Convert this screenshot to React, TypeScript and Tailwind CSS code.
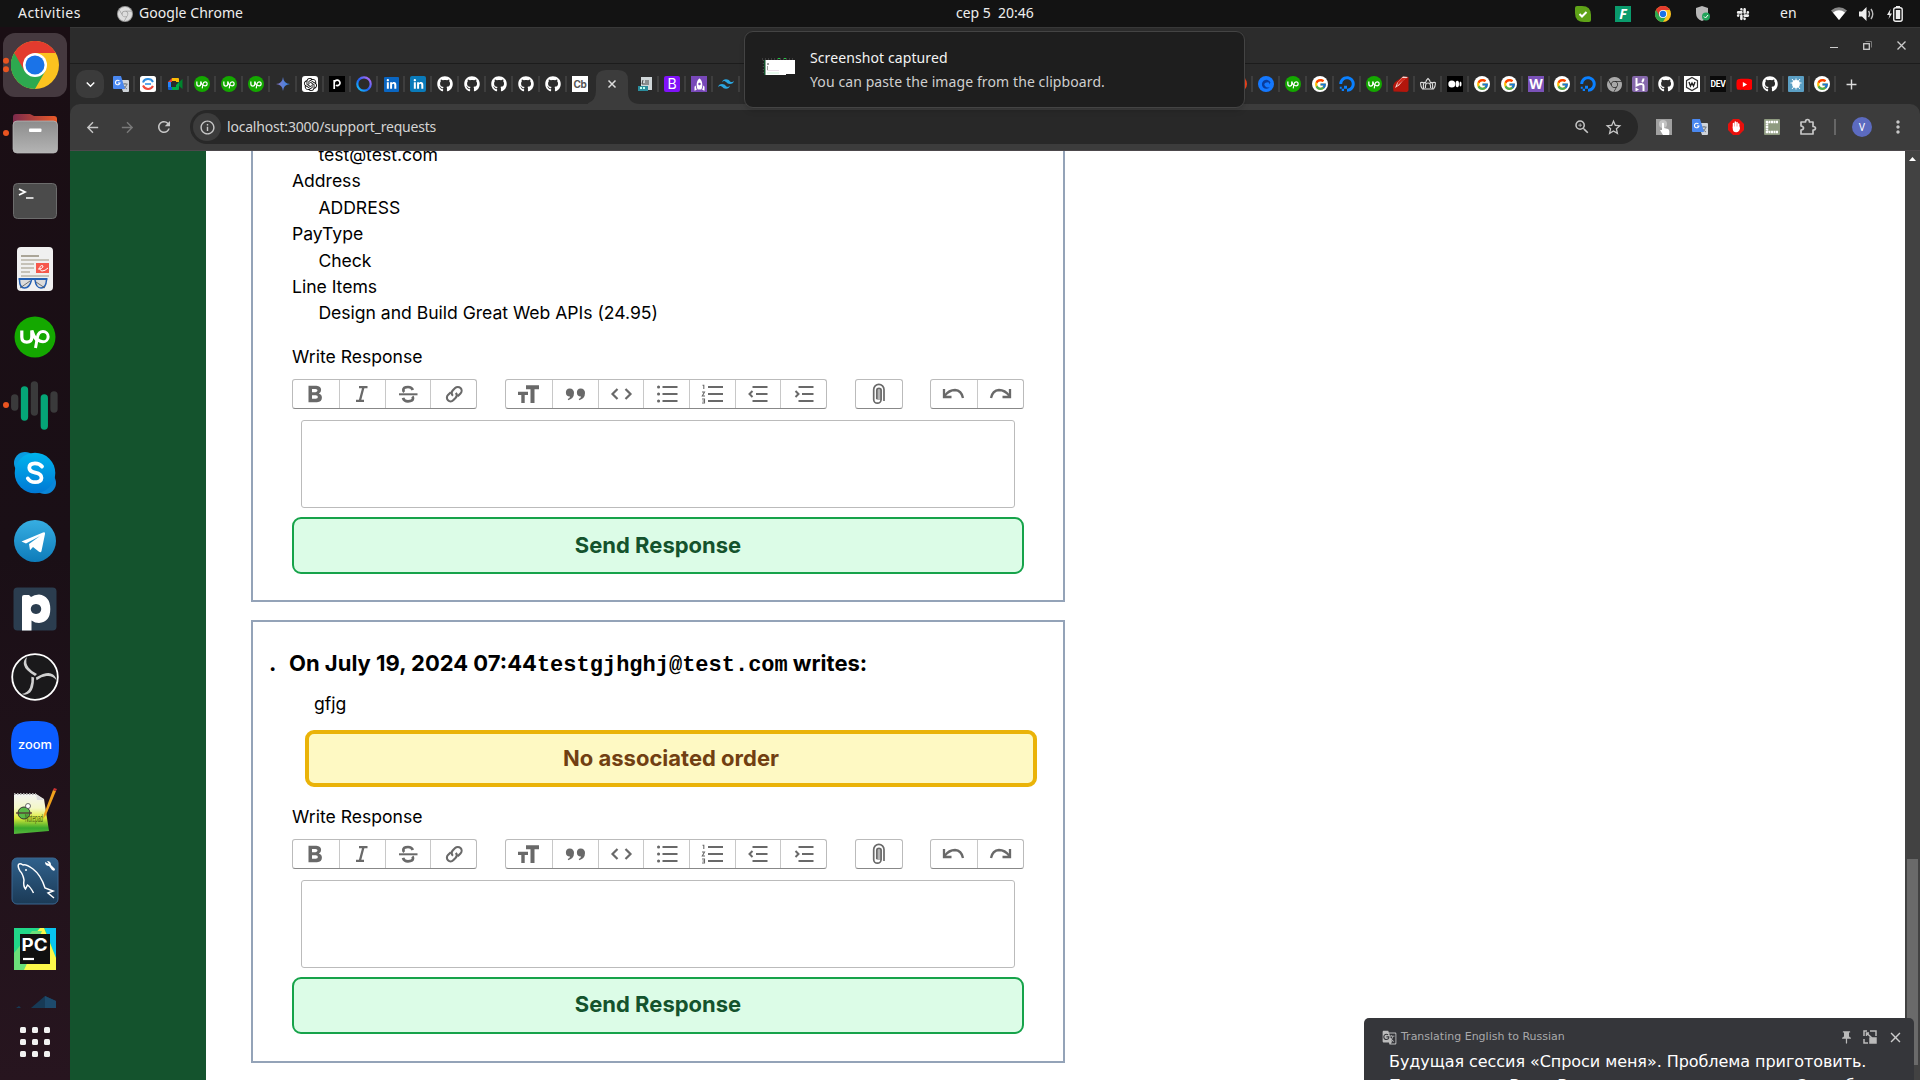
import React from "react";
import { FaDigitalOcean, FaGithub, FaLinkedinIn, FaSlack, FaYoutube } from "react-icons/fa";
import { FcGoogle } from "react-icons/fc";
import { SiHeroku, SiOpenai, SiTailwindcss, SiGooglechrome } from "react-icons/si";
import {
  MdAdd, MdArrowBack, MdArrowForward, MdClose, MdGTranslate, MdInfoOutline, MdKeyboardArrowDown,
  MdMoreVert, MdOutlineExtension, MdPushPin, MdRefresh, MdRocket, MdStarBorder, MdZoomIn,
} from "react-icons/md";

function ChromeLogo({ size }: { size: number }) {
  return (
    <svg width={size} height={size} viewBox="0 0 48 48" className="shrink-0">
      <circle cx="24" cy="24" r="24" fill="#fcc31f" />
      <path d="M3.2 12 A24 24 0 0 0 24 48 L34.4 30 L24 24 Z" fill="#2da94f" />
      <path d="M3.2 12 A24 24 0 0 1 44.8 12 H24 L13.6 30 Z" fill="#e33b2e" />
      <circle cx="24" cy="24" r="12" fill="#fff" />
      <circle cx="24" cy="24" r="9.5" fill="#1a73e8" />
    </svg>
  );
}

function UpMark() {
  return (
    <>
      <circle cx="20.500" cy="20.500" r="20.500" fill="#14a800" />
      <path d="M7.300 14v6.500q0 5.200 5 5.200t5-5.200V14q1.500 6 5.500 10" stroke="#fff" strokeWidth="3.200" fill="none" />
      <path d="M21 31.500l2-11q1-5.500 5.500-5.500a5 5 0 0 1 0 10.300q-3.500 0-6-3" stroke="#fff" strokeWidth="3" fill="none" />
    </>
  );
}
function Up() {
  return (
    <svg width="16" height="16" viewBox="0 0 41 41">
      <UpMark />
    </svg>
  );
}
function G() {
  return (
    <span className="flex h-4 w-4 items-center justify-center rounded-full bg-white">
      <FcGoogle size={13} />
    </span>
  );
}
function Gh() {
  return <FaGithub size={16} className="text-white" />;
}
function Ocean() {
  return <FaDigitalOcean size={16} className="text-[#0a80ff]" />;
}
function Li({ light = false }: { light?: boolean }) {
  return (
    <span className={light ? "flex h-4 w-4 items-center justify-center rounded-[2px] bg-[#0a7bba] text-white" : "flex h-[15px] w-[15px] items-center justify-center rounded-[1px] bg-[#0a66c2] text-white"}>
      <FaLinkedinIn size={11} />
    </span>
  );
}
function Translate() {
  return (
    <svg width="16" height="16" viewBox="0 0 16 16">
      <path d="M6 4h9q1 0 1 1v10q0 1-1 1h-5z" fill="#cfd4da" />
      <path d="M9.5 8h5M12 7v1M14 8q-1 3.500-4 5M10.500 9.500q1.500 2.500 3.500 3.500" stroke="#6b747c" fill="none" strokeWidth="0.900" />
      <path d="M1 0h7l4 13H1q-1 0-1-1V1q0-1 1-1z" fill="#4a88f0" />
      <path d="M6.500 5A2.300 2.300 0 1 0 7 7H5" stroke="#fff" fill="none" strokeWidth="1.100" />
    </svg>
  );
}
function Ring() {
  return (
    <svg width="16" height="16" viewBox="0 0 16 16">
      <defs>
        <linearGradient id="ring" x1="0" x2="1" y1="1" y2="0">
          <stop offset="0" stopColor="#14d0ff" /><stop offset=".45" stopColor="#1c62f4" /><stop offset="1" stopColor="#c86cf5" />
        </linearGradient>
      </defs>
      <circle cx="8" cy="8" r="6.700" fill="none" stroke="url(#ring)" strokeWidth="2.200" />
    </svg>
  );
}

const leftTabs: React.ReactNode[] = [
  <Translate />,
  <svg width="16" height="16" viewBox="0 0 16 16"><rect width="16" height="16" rx="2.500" fill="#fff" /><path d="M3 6.500C4.500 2 11 2 13 6" fill="none" stroke="#2f8de0" strokeWidth="2" /><path d="M3 9.500C5 14 11 14 13 10" fill="none" stroke="#f04a3c" strokeWidth="2" /><path d="M5 8h6" stroke="#4aa0e8" strokeWidth="1.800" /></svg>,
  <svg width="16" height="16" viewBox="0 0 16 16"><path d="M1 6l4-4v4z" fill="#ea4335" /><path d="M5 2h6q1 0 1 1v3H9V5H5z" fill="#fbbc04" /><path d="M1 6h3v5H1z" fill="#2684fc" /><path d="M1 11h4v3H2q-1 0-1-1z" fill="#1260d0" /><path d="M5 11h4V9l3-3v7q0 1-1 1H5z" fill="#00ac47" /><path d="M12 6l3.500-3v10L12 10z" fill="#00832d" /></svg>,
  <Up />, <Up />, <Up />,
  <svg width="14" height="14" viewBox="0 0 14 14"><defs><linearGradient id="gem" x1="0" x2="1"><stop offset="0" stopColor="#8a78c8" /><stop offset="1" stopColor="#2f86e8" /></linearGradient></defs><path d="M7 0Q7.500 6.500 14 7Q7.500 7.500 7 14Q6.500 7.500 0 7Q6.500 6.500 7 0z" fill="url(#gem)" /></svg>,
  <span className="flex h-4 w-4 items-center justify-center rounded-[3px] bg-white text-black"><SiOpenai size={13} /></span>,
  <svg width="16" height="16" viewBox="0 0 16 16"><rect width="16" height="16" fill="#000" /><path d="M5.200 4v9M5.200 7a2.900 2.700 0 1 1 1.600 2.300" fill="none" stroke="#fff" strokeWidth="1.700" /></svg>,
  <Ring />, <Li />, <Li light />, <Gh />, <Gh />, <Gh />, <Gh />, <Gh />,
];

const rightTabs: React.ReactNode[] = [
  <svg width="16" height="16" viewBox="0 0 16 16"><circle cx="8" cy="8" r="8" fill="#1478ff" /><path d="M12.500 6.500A4.500 4.500 0 1 0 12 11Q9 12.500 7 10T8.500 6.500 11 8.500z" fill="#0a3c9c" /></svg>,
  <Up />, <G />, <Ocean />, <Up />,
  <svg width="16" height="16" viewBox="0 0 16 16"><path d="M10 .500L15.500 1 15.500 14.500 14 16 .500 15.500 0 10q1-4 5-6z" fill="#b3160c" /><path d="M10 .500l5 .5-5 3.500-4 5-4 2.500 2-5z" fill="#f2d8d4" /><path d="M9 2l5 0-5 3.500-5 4.500 1-4z" fill="#d52a1c" /></svg>,
  <svg width="16" height="16" viewBox="0 0 16 16" fill="none" stroke="#ddd" strokeWidth="1.100"><path d="M4 13H2.500Q0 9.500.8 6.500q2-.5 3.500 1M12 13h1.500q2.500-3.500 1.700-6.500-2-.5-3.500 1M4 13q-1.500-4 .3-6.500L5.500 7Q6 4 8 2.500 10 4 10.500 7l1.200-.5Q13.500 9 12 13zM5.500 12q-.5-5 2.500-5t2.500 5" /></svg>,
  <span className="flex h-4 w-4 items-center justify-center bg-black text-white"><svg width="14" height="8" viewBox="0 0 14 8" fill="#fff"><circle cx="3.800" cy="4" r="3.500" /><ellipse cx="9.300" cy="4" rx="1.700" ry="3.200" /><ellipse cx="12.500" cy="4" rx="1" ry="2.600" /></svg></span>,
  <G />, <G />,
  <span className="flex h-4 w-4 items-center justify-center bg-[#7b52b8] text-[14px] leading-none font-bold text-white">W</span>,
];
const farTabs: React.ReactNode[] = [
  <G />, <Ocean />,
  <SiGooglechrome size={15} className="text-[#a8a8a8]" />,
  <span className="flex h-4 w-4 items-center justify-center rounded-[2px] bg-[#8668ac] text-white"><svg width="11" height="13" viewBox="0 0 11 13" fill="none" stroke="#fff" strokeWidth="2"><path d="M1.500 0v7.500Q8.500 4.500 8.500 8v5M8.500.500Q8.500 2.500 7 4" /><path d="M.500 9.500L4 11.500.500 13.500z" fill="#fff" stroke="none" /></svg></span>,
  <Gh />,
  <svg width="16" height="16" viewBox="0 0 16 16"><rect width="16" height="16" fill="#fff" /><path d="M8 1.500l5.500 3.200v6.600L8 14.500l-5.500-3.200V4.700z" fill="none" stroke="#333" strokeWidth="1.200" /><path d="M5 6l1.500 4L8 7l1.500 3L11 6" fill="none" stroke="#222" strokeWidth="1.400" /></svg>,
  <span className="flex h-4 w-4 items-center justify-center bg-[#0a0a0a]"><span className="font-['Roboto'] text-[8.5px] leading-none font-bold tracking-[-0.3px] text-white">DEV</span></span>,
  <span className="flex h-4 w-4 items-center justify-center bg-[linear-gradient(#fff,#fff)] bg-[size:6px_6px] bg-center bg-no-repeat text-[#f00]"><FaYoutube size={17} className="shrink-0" /></span>,
  <Gh />,
  <svg width="16" height="16" viewBox="0 0 16 16"><rect width="16" height="16" rx="1" fill="#5b9fc4" /><circle cx="8" cy="8" r="3.900" fill="#fff" /><g stroke="#fff" strokeWidth="1"><path d="M8 2.500v11M2.500 7h11M4 3l8 10M12 3L4 13" /></g></svg>,
  <G />,
];

function Sep() {
  return <span className="h-4 w-[2px] shrink-0 bg-[#3e3e3e]" />;
}
function Tab({ icon, narrow }: { icon: React.ReactNode; narrow?: boolean }) {
  return (
    <div className={narrow ? "flex w-[26px] shrink-0 items-center" : "flex w-[27px] shrink-0 items-center"}>
      <span className="flex h-4 w-4 shrink-0 items-center justify-center overflow-hidden">{icon}</span>
      <span className="w-1 shrink-0" />
      <Sep />
    </div>
  );
}

/* ---------- dock ---------- */
const dockIcons: { dots: number; art: React.ReactNode }[] = [
  {
    dots: 2,
    art: (
      <>
        <rect x="3" y="2" width="64" height="64" rx="12" fill="#45393f" />
        <g transform="translate(11 10)">
          <ChromeLogo size={48} />
        </g>
      </>
    ),
  },
  {
    dots: 1,
    art: (
      <>
        <path d="M13 18q0-3 3-3h14l4 2h20q3 0 3 3v20H13z" fill="url(#folder)" />
        <rect x="13" y="22" width="44.500" height="32" rx="4" fill="url(#gray)" stroke="#bbb" strokeWidth=".7" />
        <rect x="29" y="29.500" width="12.500" height="3.500" rx="1" fill="#fff" />
      </>
    ),
  },
  {
    dots: 0,
    art: (
      <>
        <rect x="13.500" y="16.500" width="43" height="35" rx="4" fill="#4b4b4b" stroke="#6c6c6c" />
        <path d="M19 22l6 3-6 3" stroke="#fff" strokeWidth="1.800" fill="none" />
        <path d="M26 31h7.500" stroke="#fff" strokeWidth="1.500" />
      </>
    ),
  },
  {
    dots: 0,
    art: (
      <>
        <rect x="17" y="12" width="36" height="44" rx="4" fill="#f0f0f0" />
        <path d="M21 21h18" stroke="#aaa598" strokeWidth="2" />
        <path d="M21 25h28M21 29h13M21 33h13M21 37h9M21 41h28" stroke="#c6c2b8" strokeWidth="1.800" />
        <rect x="36" y="28" width="13" height="10" fill="#f6584c" />
        <path d="M38 34q5 0 5-3c-3-2-5 4-1 5q3 0 6-3" stroke="#fff" fill="none" />
        <path d="M18.500 44h29" stroke="#2460b4" strokeWidth="2" />
        <path d="M19.500 45q0 8 5 8t7-8M35 45q1 8 6 8t5.500-8" stroke="#2460b4" strokeWidth="1.500" fill="#dcdcdc" />
        <path d="M20 53l10-7M36 47l9 6" stroke="#555" strokeWidth=".8" />
      </>
    ),
  },
  {
    dots: 0,
    art: (
      <g transform="translate(14.500 13.500)">
        <UpMark />
      </g>
    ),
  },
  {
    dots: 1,
    art: (
      <g strokeWidth="7.300" strokeLinecap="round">
        <path d="M14.700 27v9M34.400 14v27M54 24v14" stroke="#3a3a3b" />
        <path d="M24.500 19v27M44.300 27v28" stroke="#05a577" />
      </g>
    ),
  },
  {
    dots: 0,
    art: (
      <>
        <circle cx="25" cy="24" r="11" fill="#0a9be0" />
        <circle cx="45" cy="44" r="11" fill="#0a86d8" />
        <circle cx="35" cy="34" r="20.300" fill="url(#sky)" />
        <path d="M42 27.500q-2.500-3.200-7-3.200-5.700 0-5.700 4.500 0 3.800 5.900 4.900 6.500 1.300 6.300 5.300-.3 4.200-6.500 4.200-5 0-7.200-3.800" stroke="#fff" strokeWidth="3.800" fill="none" strokeLinecap="round" />
      </>
    ),
  },
  {
    dots: 0,
    art: (
      <>
        <circle cx="35" cy="34" r="21" fill="url(#tele)" />
        <path d="M21.500 34.500L43 25.500q2.500-1 2 1.500L41.500 44q-.5 2-2.500.8L33 40l-3 3.300-1-6.300 11-8-14 7.500z" fill="#fff" />
      </>
    ),
  },
  {
    dots: 0,
    art: (
      <>
        <rect x="13.500" y="12.500" width="43" height="43" rx="4" fill="#2b3d4f" />
        <path fillRule="evenodd" d="M22 22q0-2 2-2h5l2 2q3-2.500 8-2.500 11.300 1.500 11.300 14.500T39 48q-4 0-7.500-2.500v10H22zM36 29c-7 0-7 10 0 10s7-10 0-10z" fill="#fff" />
      </>
    ),
  },
  {
    dots: 0,
    art: (
      <>
        <circle cx="35" cy="34" r="22.800" fill="#1a191b" stroke="#fff" strokeWidth="1.800" />
        <g fill="#d0d0d0">
          <path d="M35 33Q25 27 24 22q-1-5 3-8-2 6 1.500 10.500 3 4 8.500 6.500z" />
          <path d="M35 33Q25 27 24 22q-1-5 3-8-2 6 1.500 10.500 3 4 8.500 6.500z" transform="rotate(120 35 34)" />
          <path d="M35 33Q25 27 24 22q-1-5 3-8-2 6 1.500 10.500 3 4 8.500 6.500z" transform="rotate(240 35 34)" />
        </g>
      </>
    ),
  },
  {
    dots: 0,
    art: (
      <>
        <path d="M35 10C54 10 59 15 59 34S54 58 35 58 11 53 11 34 16 10 35 10z" fill="#0b5cff" />
        <text x="35" y="37.500" textAnchor="middle" className="font-['Inter'] text-[12px] font-medium" textLength="34" lengthAdjust="spacingAndGlyphs" fill="#fff">zoom</text>
      </>
    ),
  },
  {
    dots: 0,
    art: (
      <>
        <path d="M14 15h22l8 5 5 32-35 3z" fill="url(#note)" />
        <path d="M14 15h22" stroke="#aaa" strokeWidth="2" strokeDasharray="1.500 1.500" />
        <path d="M36 15l1 6 7 0z" fill="#ddd" />
        <path d="M56 12L46 36l-3 4 1-5L53 11z" fill="#f0a21c" />
        <path d="M56 12l1-2-3-1-1 2z" fill="#c33" />
        <ellipse cx="24" cy="34" rx="6" ry="6" fill="#5ab848" stroke="#333" />
        <circle cx="28" cy="27" r="2.500" fill="#fff" stroke="#333" strokeWidth=".7" />
        <path d="M16 34h16" stroke="#533" strokeWidth="1.300" />
        <text x="25" y="43" className="font-['Liberation_Sans'] text-[11px]" textLength="18" lengthAdjust="spacingAndGlyphs" fill="#3c5a10">Notepad</text>
      </>
    ),
  },
  {
    dots: 0,
    art: (
      <>
        <rect x="12" y="11" width="46" height="46" rx="5" fill="url(#sql)" stroke="#3a6690" />
        <path d="M54 51l-6-5 5-2-8-3Q41 28 33 22q-7-5-10-4-3-2-4.500-.5-1 2 1.500 6.500 3 3 4 9-1 6 1.500 9l2-4q3 2 6 8" stroke="#fff" strokeWidth="1.500" fill="none" />
        <circle cx="26" cy="23" r="1" fill="#fff" />
        <path d="M45 15q0 4 4 4l3 4q3 2 3-1l-4-4q0-4-4-4l2 3z" fill="#fff" />
      </>
    ),
  },
  {
    dots: 0,
    art: (
      <>
        <rect x="14" y="13" width="42" height="42" fill="#21d789" />
        <path d="M45 13h11v30z" fill="#08c5f0" />
        <path d="M14 43L40 13h4l12 30v12H24z" fill="#fcf84a" />
        <path d="M14 38l18-22h10L24 55H14z" fill="#6be07a" />
        <rect x="20" y="19" width="30" height="30" fill="#101010" />
        <text x="21.500" y="35.500" className="font-['Inter'] text-[17px] font-bold" textLength="26" lengthAdjust="spacingAndGlyphs" fill="#fff">PC</text>
        <path d="M23 44h11" stroke="#fff" strokeWidth="2.200" />
      </>
    ),
  },
];

function Dock() {
  return (
    <aside className="flex w-[70px] shrink-0 flex-col bg-linear-to-b from-[#1a0e14] via-[#1a0f16] to-[#27151f] pt-1">
      <svg width="0" height="0" className="absolute">
        <defs>
          <linearGradient id="folder"><stop offset="0" stopColor="#7c2a4c" /><stop offset="1" stopColor="#ea5a28" /></linearGradient>
          <linearGradient id="gray" x2="0" y2="1"><stop offset="0" stopColor="#8c8c8c" /><stop offset="1" stopColor="#b4b4b4" /></linearGradient>
          <linearGradient id="sky" x2="0" y2="1"><stop offset="0" stopColor="#00b4ee" /><stop offset="1" stopColor="#0078d4" /></linearGradient>
          <linearGradient id="tele" x2="0" y2="1"><stop offset="0" stopColor="#37aee2" /><stop offset="1" stopColor="#0e7cba" /></linearGradient>
          <linearGradient id="sql" x2="0" y2="1"><stop offset="0" stopColor="#30618c" /><stop offset="1" stopColor="#1b3a56" /></linearGradient>
          <linearGradient id="note" x2="0" y2="1"><stop offset="0" stopColor="#f4f4f4" /><stop offset=".35" stopColor="#f4f8c8" /><stop offset=".6" stopColor="#e0ec3a" /><stop offset=".85" stopColor="#38a82c" /><stop offset="1" stopColor="#58b83c" /></linearGradient>
        </defs>
      </svg>
      {dockIcons.map((d, i) => (
        <svg key={i} width="70" height="68" viewBox="0 0 70 68" className="shrink-0">
          {d.art}
          {d.dots === 1 && <circle cx="6" cy="34" r="3" fill="#e95420" />}
          {d.dots === 2 && <><circle cx="6" cy="29.700" r="3" fill="#e95420" /><circle cx="6" cy="38.300" r="3" fill="#e95420" /></>}
        </svg>
      ))}
      <svg width="70" height="26" viewBox="0 0 70 26" className="shrink-0">
        <path d="M31 25l14-12 11 5v7z" fill="#173a56" />
        <path d="M45 13l11 5v7H45z" fill="#1d4a6c" />
        <path d="M16 25l3-2 2 2z" fill="#173a56" />
      </svg>
      <div className="mt-[18px] ml-5 grid w-[30px] grid-cols-3 gap-x-[6px] gap-y-[6px]">
        {Array.from({ length: 9 }).map((_, i) => (
          <span key={i} className="h-[6px] w-[6px] rounded-[1.5px] bg-[#f2f2f2]" />
        ))}
      </div>
    </aside>
  );
}

/* ---------- page ---------- */
const S = "#696969";
const bars = (x: number) => <path d={`M${x} 7h15M${x} 14h15M${x} 21h15`} strokeWidth="2" />;
const textTools: React.ReactNode[] = [
  <path fillRule="evenodd" fill={S} stroke="none" d="M7.500 5.700h8q4.600.3 4.600 4.200 0 2.500-2.200 3.700 3 1 3 4.200 0 4.200-4.900 4.400H7.500zM11 9v3.200h3.500q2-.2 2-1.600t-2-1.600zM11 15.300v3.500h3.700q2.200-.2 2.200-1.800t-2.200-1.700z" />,
  <path d="M11 7.200h8.500M8 20.800h8M15.500 7l-3.700 14" strokeWidth="2.300" />,
  <><path d="M5 14.300h18.500" strokeWidth="2" /><path d="M18.800 10Q17.800 7 14 7q-4.700 0-4.700 3 0 1.200 1 2M9 17.800q1 3.500 5 3.500 5 0 5-3 0-1-.7-1.800" strokeWidth="2.700" /></>,
  <g strokeWidth="2.100" transform="translate(14 14) rotate(-45)"><path d="M-1-3.500h-4a3.700 3.700 0 0 0 0 7.400h3.500a3.700 3.700 0 0 0 3.600-3.400" /><path d="M1 4.200h4a3.700 3.700 0 0 0 0-7.600H1.500A3.700 3.700 0 0 0-2 .5" /></g>,
];
const blockTools: React.ReactNode[] = [
  <path d="M12 5.300h13v4h-4.500V23h-4V9.300H12zM4 11.700h10v3.300h-3.300v8H7.300v-8H4z" fill={S} stroke="none" />,
  <path d="M8.700 8.500a4.200 4.200 0 0 1 4.300 4.500q0 5.500-5.700 7.200l-.6-1.200q2.200-1 2.400-2.500A4 4 0 1 1 8.700 8.500zM19.700 8.500a4.200 4.200 0 0 1 4.300 4.500q0 5.500-5.700 7.200l-.6-1.200q2.200-1 2.400-2.500A4 4 0 1 1 19.700 8.500z" fill={S} stroke="none" />,
  <path d="M10.500 9l-5 5 5 5M18.500 9l5 5-5 5" strokeWidth="2.200" />,
  <>{bars(9.500)}<path d="M5.500 7h.1M5.500 14h.1M5.500 21h.1" strokeWidth="3" strokeLinecap="round" /></>,
  <>{bars(10)}<path d="M4.500 5.200h1.300V9M4 12h2.500L4.300 16H7M4 19h2.500v4H4M4.500 21h2" strokeWidth="1.100" /></>,
  <><path d="M8.500 7h15M12 14h11.500M8.500 21h15" strokeWidth="2" /><path d="M8.500 11l-3 3 3 3" strokeWidth="2" /></>,
  <><path d="M8.500 7h15M12 14h11.500M8.500 21h15" strokeWidth="2" /><path d="M5.500 11l3 3-3 3" strokeWidth="2" /></>,
];
const fileTools: React.ReactNode[] = [
  <><rect x="11.500" y="8" width="5" height="12" fill="#b4b4b4" stroke="none" /><path d="M19 21V9.500a5 5 0 0 0-10.300 0v10a3.700 3.700 0 0 0 7.400 0V10a2.200 2.200 0 0 0-4.300 0v9" strokeWidth="1.700" /></>,
];
const historyTools: React.ReactNode[] = [
  <><path d="M5 9v8h7.500" strokeWidth="2.300" /><path d="M5.500 16Q10 10 16 10q6.500.5 8 8" strokeWidth="2.300" /></>,
  <><path d="M23 9v8h-7.500" strokeWidth="2.300" /><path d="M22.500 16Q18 10 12 10q-6.500.5-8 8" strokeWidth="2.300" /></>,
];

function ToolGroup({ tools, cls }: { tools: React.ReactNode[]; cls: string }) {
  return (
    <div className={`flex h-[30px] divide-x divide-[#c8c8c8] rounded-[3px] border border-[#bbb] border-b-[#888] ${cls}`}>
      {tools.map((t, i) => (
        <span key={i} className={i === 0 && tools.length > 1 ? "flex w-[47px] shrink-0 items-center justify-center pr-[2px]" : "flex flex-1 items-center justify-center"}>
          <svg width="28" height="28" viewBox="0 0 28 28" fill="none" stroke={S} className="shrink-0">
            {t}
          </svg>
        </span>
      ))}
    </div>
  );
}

function ResponseForm() {
  return (
    <div className="ml-[39px] w-[732px]">
      <p>Write Response</p>
      <div className="mt-[8.600px] flex">
        <ToolGroup tools={textTools} cls="w-[185px]" />
        <ToolGroup tools={blockTools} cls="ml-[28px] w-[322px]" />
        <ToolGroup tools={fileTools} cls="ml-[28px] w-[48px]" />
        <ToolGroup tools={historyTools} cls="ml-[27px] w-[94px]" />
      </div>
      <div className="mx-[9px] mt-[11px] h-[88px] rounded-[3px] border border-[#bbb]" />
      <button className="mt-[9px] flex h-[57px] w-full items-center justify-center rounded-[9px] border-2 border-[#16a34a] bg-[#dcfce7] pb-[2px] text-[22px] font-bold text-[#14532d]">
        Send Response
      </button>
    </div>
  );
}

function Page() {
  return (
    <div className="flex min-h-0 flex-1 bg-white font-['Inter'] text-[17.6px] leading-[26.4px] text-black">
      <div className="w-[136px] shrink-0 bg-[#14532d]" />
      <main className="flex min-w-0 flex-1 flex-col overflow-hidden pl-[45px]">
        <section className="h-[451px] w-[814px] shrink-0 overflow-hidden border-2 border-t-0 border-[#94a3b8]">
          <dl className="-mt-[9px] ml-[39px] tracking-[-0.03px]">
            <dd className="ml-[26.400px]">test@test.com</dd>
            <dt>Address</dt>
            <dd className="ml-[26.400px]">ADDRESS</dd>
            <dt>PayType</dt>
            <dd className="ml-[26.400px]">Check</dd>
            <dt>Line Items</dt>
            <dd className="ml-[26.400px]">Design and Build Great Web APIs (24.95)</dd>
          </dl>
          <div className="mt-[17.600px]"><ResponseForm /></div>
        </section>
        <section className="mt-[18px] h-[443px] w-[814px] shrink-0 overflow-hidden border-2 border-[#94a3b8] pt-[25px]">
          <h2 className="flex h-[32px] items-baseline pl-[16px] text-[22px] leading-[32px] font-bold">
            <span className="w-[20px] leading-none">.</span>
            <span>On July 19, 2024 07:44</span>
            <span className="font-['Liberation_Mono'] font-bold">testgjhghj@test.com</span>
            <span className="ml-[5px]">writes:</span>
          </h2>
          <p className="mt-[12px] ml-[61px]">gfjg</p>
          <div className="mt-[12.500px] ml-[52px] flex h-[57px] w-[732px] items-center justify-center rounded-[9px] border-4 border-[#eab308] bg-[#fef9c3] text-[22px] font-bold text-[#713f12]">
            No associated order
          </div>
          <div className="mt-[17px]"><ResponseForm /></div>
        </section>
      </main>
      <div className="flex w-[15px] shrink-0 flex-col items-center bg-[#424242]">
        <svg width="15" height="15" viewBox="0 0 15 15"><path d="M4 10h7L7.500 6z" fill="#fff" /></svg>
        <div className="mt-[693px] h-[206px] w-[11px] bg-[#6a6a6a]" />
      </div>
    </div>
  );
}

export default function App() {
  return (
    <div className="relative flex h-[1080px] w-[1920px] flex-col overflow-hidden bg-[#2b2b2b] font-['Noto_Sans'] text-white">
      <header className="flex h-[27px] shrink-0 items-center bg-[#131313] text-[14px] text-[#eee]">
        <span className="w-[99px] pb-[2px] pl-[18px] tracking-[0.45px]">Activities</span>
        <span className="ml-[18px] flex h-4 w-4 items-center justify-center rounded-full bg-[#9a9a9a]"><SiGooglechrome size={14} className="text-[#ddd]" /></span>
        <span className="ml-[6px] w-[817px] pb-[2px] tracking-[0.05px]">Google Chrome</span>
        <span className="w-[614px] pb-[2px] whitespace-pre">сер 5  20:46</span>
        <div className="flex items-center">
          <svg width="16" height="16" viewBox="0 0 16 16" className="mx-[5px]"><path d="M2 0h5q9 0 9 9v5q0 2-2 2H9Q0 16 0 7V2q0-2 2-2z" fill="#5fa318" /><path d="M4.500 8l2.500 2.500 4.500-4.500" stroke="#fff" strokeWidth="2" fill="none" /></svg>
          <span className="ml-[19px] flex h-4 w-4 items-center justify-center bg-[#0a9b6c] text-[14px] leading-none font-bold text-white italic">F</span>
          <span className="ml-6"><ChromeLogo size={16} /></span>
          <svg width="16" height="16" viewBox="0 0 16 16" className="ml-6"><path d="M7 0l6 2v5q0 6-6 8-6-2-6-8V2z" fill="#b8b8b8" /><circle cx="11" cy="10.500" r="4" fill="#21a35a" /><path d="M9 10.500l1.500 1.500 2.500-3" stroke="#fff" fill="none" /></svg>
          <FaSlack size={14} className="ml-[25px]" />
          <span className="ml-[30px] w-[51px] pb-[2px]">en</span>
          <svg width="16" height="14" viewBox="0 0 16 14"><path d="M0 3.500Q8-3 16 3.500L8 13z" fill="#888" /><path d="M2 5.500Q8 1 14 5.500L8 13z" fill="#fff" /></svg>
          <svg width="15" height="14" viewBox="0 0 15 14" className="ml-3"><path d="M0 4.500h3L7.500 0v14L3 9.500H0z" fill="#eee" /><path d="M9.500 4q2 3 0 6M12 2q3.500 5 0 10" stroke="#bbb" fill="none" strokeWidth="1.400" /></svg>
          <svg width="16" height="16" viewBox="0 0 16 16" className="ml-[13px]"><path d="M3.500 3L0 9h2.500L1.500 13 5 7.500H2.800z" fill="#eee" /><rect x="6.700" y="1.700" width="8.500" height="13.500" rx="2" fill="none" stroke="#eee" strokeWidth="1.400" /><rect x="8.800" y="4" width="4.400" height="9" fill="#eee" /><path d="M9 .700h4" stroke="#eee" strokeWidth="1.400" /></svg>
        </div>
      </header>

      <div className="flex min-h-0 flex-1">
        <Dock />
        <div className="flex min-w-0 flex-1 flex-col">
          <div className="flex h-[37px] shrink-0 items-center justify-end border-t border-b border-t-[#383838] border-b-[#1c1c1c] bg-[#2c2c2c] text-[#ccc]">
            <span className="mt-[4px] mr-[25px] h-px w-2 bg-[#ccc]" />
            <svg width="9" height="9" viewBox="0 0 9 9" fill="none"><path d="M2.500.500h6v6" stroke="#777" /><rect x=".7" y="2.700" width="5.600" height="5.600" stroke="#ccc" strokeWidth="1.300" /></svg>
            <svg width="9" height="9" viewBox="0 0 9 9" className="mr-[14px] ml-[25px]"><path d="M.5.500l8 8M8.500.500l-8 8" stroke="#ccc" strokeWidth="1.300" /></svg>
          </div>

          <div className="flex h-10 shrink-0 items-center pl-[6px]">
            <span className="flex h-7 w-7 shrink-0 items-center justify-center rounded-[10px] bg-[#3b3b3b]"><MdKeyboardArrowDown size={17} /></span>
            <span className="w-[9px] shrink-0" />
            {leftTabs.map((t, i) => <Tab key={i} icon={t} />)}
            <span className="flex h-4 w-4 shrink-0 items-center justify-center bg-white font-['Inter'] text-[10px] font-bold tracking-[-0.3px] text-[#555]">Cb</span>
            <svg width="52" height="40" viewBox="0 0 52 40" className="-mr-[3px] shrink-0">
              <path d="M-4 40Q8 39 8 26V16Q8 6 18 6H30Q40 6 40 16V28Q40 40 52 40z" fill="#3c3c3c" />
              <path d="M20.500 16.500l7 7M27.500 16.500l-7 7" stroke="#ddd" strokeWidth="1.500" />
            </svg>
            <Tab icon={<svg width="14" height="16" viewBox="0 0 14 16"><path d="M3 1h11v13H3z" fill="#cfd6d8" /><path d="M5 4l-1 4M8 4v3M10 4v3M4 8h7" stroke="#444" /><path d="M0 10h10v5H0z" fill="#2a8c9c" /><path d="M2 12h6" stroke="#bfe" strokeDasharray="2 1" strokeWidth="2" /></svg>} />
            <Tab icon={<span className="flex h-4 w-4 items-center justify-center rounded-[2px] bg-[#8012f8] font-['Inter'] text-[14px] leading-none">B</span>} />
            <Tab icon={<span className="flex h-4 w-4 items-center justify-center bg-[#7848b8]"><MdRocket size={15} /></span>} />
            <Tab icon={<SiTailwindcss size={16} className="text-[#2ba6e0]" />} />
            <span className="w-[486px] shrink-0" />
            <Tab icon={<span className="h-4 w-4 rounded-full bg-[#f0441c]" />} />
            {rightTabs.map((t, i) => <Tab key={i} icon={t} narrow={i === 10} />)}
            {farTabs.map((t, i) => <Tab key={i} icon={t} narrow />)}
            <MdAdd size={17} className="ml-[3px] shrink-0 text-[#ddd]" />
          </div>

          <div className="flex h-[47px] shrink-0 items-center rounded-t-[10px] border-b border-[#4c484b] bg-[#3c3c3c] text-[#c7c7c7]">
            <MdArrowBack size={17} className="ml-[14px]" />
            <MdArrowForward size={17} className="ml-[18px] text-[#7a7a7a]" />
            <MdRefresh size={18} className="ml-[19px]" />
            <div className="ml-[17px] flex h-[34px] w-[1448px] items-center rounded-full bg-[#282828] pl-[3px]">
              <span className="flex h-7 w-7 items-center justify-center rounded-full bg-[#3c3c3c]"><MdInfoOutline size={17} /></span>
              <span className="ml-[6px] flex-1 pb-[2px] text-[14px] tracking-[-0.2px] text-[#d4d4d4]">localhost:3000/support_requests</span>
              <MdZoomIn size={18} />
              <MdStarBorder size={19} className="mr-[15px] ml-[13px]" />
            </div>
            <svg width="16" height="16" viewBox="0 0 16 16" className="ml-[18px]"><rect width="16" height="16" fill="#a0a0a0" /><circle cx="7" cy="5" r="4" fill="#c4c4c4" /><path d="M6 4q2-1 2 1v4l4 1q2 1 1 6H7l-3-5h2z" fill="#fff" /></svg>
            <span className="ml-5"><Translate /></span>
            <svg width="16" height="16" viewBox="0 0 16 16" className="ml-5"><path d="M5 0h6l5 5v6l-5 5H5l-5-5V5z" fill="#e8100c" /><path d="M5.500 9V4.500M7.300 8V3M9 8V3.500M10.700 9V5" stroke="#fff" strokeWidth="1.500" strokeLinecap="round" /><path d="M4.800 7.500h6.700l.5 2q-1 4-4 3.700-3-.2-3.200-3z" fill="#fff" /></svg>
            <svg width="16" height="16" viewBox="0 0 16 16" className="ml-5"><rect width="16" height="16" rx="1" fill="#8f9b80" /><path d="M14 3H3v10h11" fill="none" stroke="#fff" strokeWidth="2.500" strokeDasharray="2 .5" /></svg>
            <svg width="18" height="18" viewBox="0 0 18 18" fill="none" stroke="#c7c7c7" strokeWidth="1.700" strokeLinejoin="round" className="mr-px ml-[19px]"><path d="M2 4h4.500q0-2.500 2-2.500T10.500 4H14v4.500q2.500 0 2.500 1.700T14 12v4H2v-4q2.500-.3 2.500-2T2 8z" /></svg>
            <span className="ml-4 h-4 w-[2px] bg-[#666]" />
            <span className="ml-4 flex h-5 w-5 items-center justify-center rounded-full bg-[#5c6bc0] font-['Roboto'] text-[10px] text-white">V</span>
            <MdMoreVert size={20} className="ml-4" />
          </div>
          <Page />
        </div>
      </div>

      <div className="absolute top-[31px] left-[744px] flex h-[77px] w-[501px] rounded-[9px] border border-[#444] bg-[#1e1e1e] shadow-md">
        <svg width="33" height="18" viewBox="0 0 33 18" className="mt-[26px] ml-[17px]">
          <path d="M0 1h33M1.500 2v15" stroke="#4a4a4a" strokeWidth="1.500" strokeDasharray="1 2" />
          <path d="M16 .500h2M22 .500h2" stroke="#2c4" />
          <path d="M3 2h30v14H24v1H3z" fill="#fff" /><path d="M2 2h1.500v15H2z" fill="#14532d" />
          <path d="M5 6h2M5 9h1M5 11h1" stroke="#444" /><path d="M5 12.500h12" stroke="#eadfe8" /><path d="M5 15h12" stroke="#d0f5dc" />
        </svg>
        <div className="ml-[15px] flex flex-col pt-[14px] text-[14px] leading-6">
          <span className="tracking-[0.1px] text-[#f4f4f4]">Screenshot captured</span>
          <span className="tracking-[0.1px] text-[#cfcfcf]">You can paste the image from the clipboard.</span>
        </div>
      </div>

      <div className="absolute top-[1018px] left-[1364px] h-[70px] w-[550px] overflow-hidden rounded-t-[5px] bg-[#35363a] font-['DejaVu_Sans']">
        <div className="flex h-[38px] items-center pl-[18px] text-[11px] text-[#a9a9ab]">
          <MdGTranslate size={15} className="text-[#bbb]" />
          <span className="ml-[4px] flex-1 pt-px">Translating English to Russian</span>
          <MdPushPin size={15} className="text-[#bbb]" />
          <svg width="14" height="14" viewBox="0 0 14 14" fill="none" stroke="#bbb" strokeWidth="1.500" className="ml-[9px]"><path d="M1 9v4h4M1 6V1h3M7 1h6v5M9 8L3.500 3M3.500 6V3H6" /><path d="M7 8h6v5H7z" fill="#bbb" /></svg>
          <MdClose size={17} className="mr-[10px] ml-[10px] text-[#ccc]" />
        </div>
        <p className="-mt-[6px] pl-[25px] text-[16px] leading-[24px] tracking-[-0.06px] whitespace-nowrap text-white">
          Будущая сессия «Спроси меня». Проблема приготовить.<br />
          Переговоры с Вами Вопросы, только это самое. Способ
        </p>
      </div>
    </div>
  );
}
